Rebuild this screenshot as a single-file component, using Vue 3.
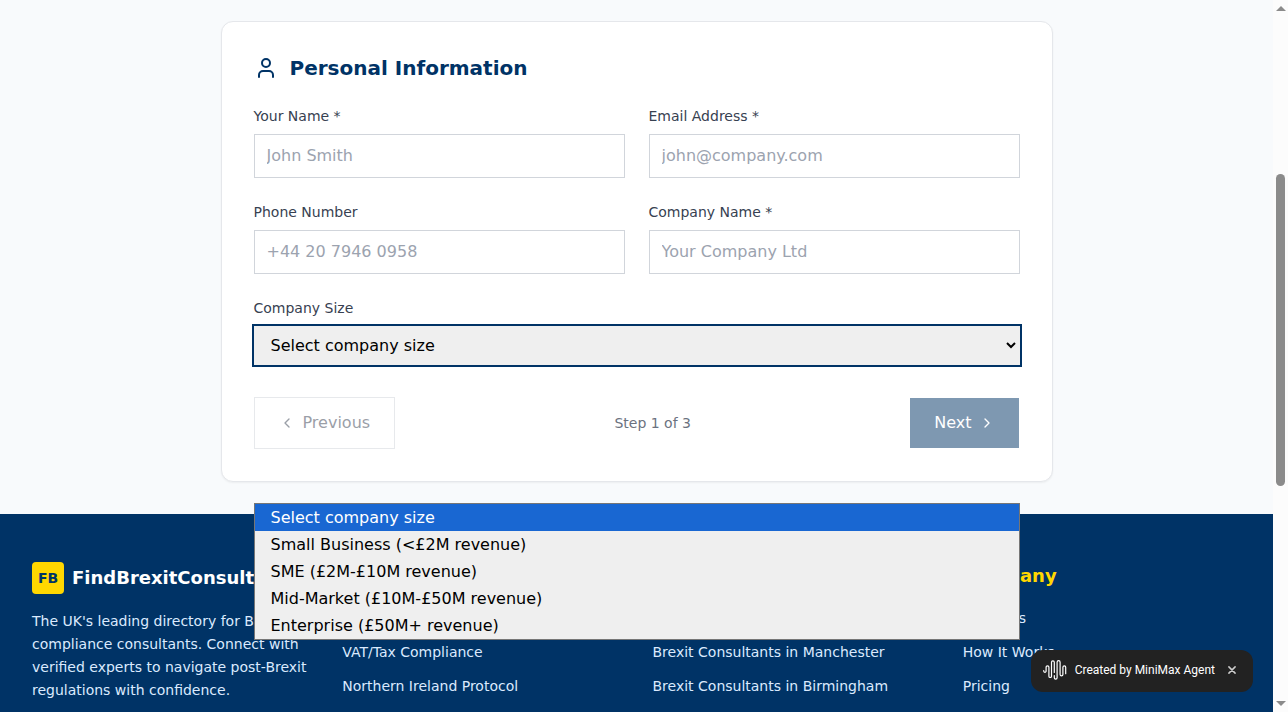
<script setup>
import { ref } from 'vue'

const fields = [
  { id: 'name', label: 'Your Name *', type: 'text', placeholder: 'John Smith' },
  { id: 'email', label: 'Email Address *', type: 'email', placeholder: 'john@company.com' },
  { id: 'phone', label: 'Phone Number', type: 'tel', placeholder: '+44 20 7946 0958' },
  { id: 'company', label: 'Company Name *', type: 'text', placeholder: 'Your Company Ltd' },
]
const sizes = [
  'Select company size',
  'Small Business (<£2M revenue)',
  'SME (£2M-£10M revenue)',
  'Mid-Market (£10M-£50M revenue)',
  'Enterprise (£50M+ revenue)',
]
const size = ref(sizes[0])
const columns = [
  { title: 'Services', links: ['Customs & Trade', 'VAT/Tax Compliance', 'Northern Ireland Protocol'] },
  { title: 'Locations', links: ['Brexit Consultants in London', 'Brexit Consultants in Manchester', 'Brexit Consultants in Birmingham'] },
  { title: 'Company', links: ['About Us', 'How It Works', 'Pricing'] },
]
</script>

<template>
  <div class="shell">
    <div class="page">
      <main class="main">
        <form class="card" @submit.prevent>
          <h2 class="heading">
            <svg class="icon-lg" viewBox="0 0 24 24" aria-hidden="true">
              <path d="M19 21v-2a4 4 0 0 0-4-4H9a4 4 0 0 0-4 4v2" />
              <circle cx="12" cy="7" r="4" />
            </svg>
            Personal Information
          </h2>
          <div class="grid">
            <div v-for="f in fields" :key="f.id" class="field">
              <label :for="f.id">{{ f.label }}</label>
              <input :id="f.id" :type="f.type" :placeholder="f.placeholder" />
            </div>
            <div class="field wide">
              <label for="size">Company Size</label>
              <select id="size" v-model="size">
                <option v-for="s in sizes" :key="s" :value="s">{{ s }}</option>
              </select>
            </div>
          </div>
          <div class="actions">
            <button type="button" class="btn prev" disabled>
              <svg class="icon-sm" viewBox="0 0 24 24" aria-hidden="true"><path d="m15 18-6-6 6-6" /></svg>
              Previous
            </button>
            <span class="step">Step 1 of 3</span>
            <button type="button" class="btn next" disabled>
              Next
              <svg class="icon-sm" viewBox="0 0 24 24" aria-hidden="true"><path d="m9 18 6-6-6-6" /></svg>
            </button>
          </div>
          <ul class="menu" role="listbox" aria-label="Company Size">
            <li
              v-for="s in sizes"
              :key="s"
              role="option"
              :aria-selected="s === size"
              :class="{ active: s === size }"
              @click="size = s"
            >{{ s }}</li>
          </ul>
        </form>
      </main>

      <footer class="footer">
        <div>
          <div class="brand">
            <span class="logo">FB</span>
            <span class="brand-name">FindBrexitConsultants</span>
          </div>
          <p class="about">
            The UK's leading directory for Brexit compliance consultants. Connect with
            verified experts to navigate post-Brexit regulations with confidence.
          </p>
        </div>
        <nav v-for="c in columns" :key="c.title" :aria-label="c.title">
          <h3>{{ c.title }}</h3>
          <ul class="links">
            <li v-for="l in c.links" :key="l"><a href="#">{{ l }}</a></li>
          </ul>
        </nav>
      </footer>

      <aside class="toast">
        <svg class="wave" viewBox="0 0 24 22" aria-hidden="true">
          <path d="M.7 11.500v.6a1.200 1.200 0 0 0 2.400 0V8.200a1.400 1.400 0 0 1 2.800 0v9a1.300 1.300 0 0 0 2.600 0V3.200a1.400 1.400 0 0 1 2.800 0V13.500" />
          <path d="M11.300 16.500v2.300a1.400 1.400 0 0 0 2.800 0V3.200a1.500 1.500 0 0 1 3 0v12.200a1.400 1.400 0 0 0 2.800 0V8.200a1.400 1.400 0 0 1 2.800 0v6.500" />
        </svg>
        <span>Created by MiniMax Agent</span>
        <button type="button" class="close" aria-label="Close">
          <svg viewBox="0 0 8 8" aria-hidden="true"><path d="M.9.9l6.200 6.200M7.100.9.9 7.100" /></svg>
        </button>
      </aside>
    </div>

    <div class="scrollbar" aria-hidden="true">
      <span class="arrow up"></span>
      <span class="before"></span>
      <span class="thumb"></span>
      <span class="after"></span>
      <span class="arrow down"></span>
    </div>
  </div>
</template>

<style>
body {
  margin: 0;
  overflow: hidden;
}
</style>

<style scoped>
.shell {
  display: flex;
  height: 100vh;
  overflow: hidden;
  font-family: "DejaVu Sans", sans-serif;
  font-size: 16px;
  line-height: 26px;
}
.shell * {
  box-sizing: border-box;
}
.page {
  flex: 1;
  min-width: 0;
  overflow: hidden;
  background: #f8fafc;
}
.main {
  position: relative;
  z-index: 1;
  padding: 21px 32px 32px;
}
.card {
  position: relative;
  max-width: 832px;
  margin: 0 auto;
  padding: 32px;
  background: #fff;
  border: 1px solid #e5e7eb;
  border-radius: 12px;
  box-shadow: 0 1px 2px rgba(0, 0, 0, 0.05);
}
.heading {
  display: flex;
  align-items: center;
  gap: 12px;
  margin: 0 0 24px;
  color: #003366;
  font-size: 20px;
  font-weight: 700;
  line-height: 28px;
}
svg {
  flex: none;
  fill: none;
  stroke: currentColor;
  stroke-width: 2;
  stroke-linecap: round;
  stroke-linejoin: round;
}
.icon-lg {
  width: 24px;
  height: 24px;
}
.icon-sm {
  width: 16px;
  height: 16px;
}
.grid {
  display: grid;
  grid-template-columns: 1fr 1fr;
  gap: 24px;
}
.field {
  display: flex;
  flex-direction: column;
  gap: 8px;
  min-width: 0;
}
.wide {
  grid-column: 1 / -1;
}
label {
  color: #374151;
  font-size: 14px;
  font-weight: 500;
  line-height: 20px;
}
input {
  width: 100%;
  height: 44px;
  padding: 0 12px 2px;
  border: 1px solid #d1d5db;
  border-radius: 0;
  background: #fff;
  color: #111827;
  font: inherit;
}
input::placeholder {
  color: #9ca3af;
}
select {
  width: 100%;
  height: 39px;
  padding: 0 12px;
  border: 1px solid #efefef;
  border-radius: 0;
  outline: 0;
  background-color: #efefef;
  box-shadow: 0 0 0 2px #003366;
  color: #000;
  font: inherit;
}
.actions {
  display: flex;
  align-items: center;
  justify-content: space-between;
  margin-top: 32px;
}
.btn {
  display: flex;
  align-items: center;
  gap: 8px;
  padding: 12px 24px;
  border: 0;
  font: inherit;
  opacity: 0.5;
}
.prev {
  border: 1px solid #d1d5db;
  background: #fff;
  color: #374151;
}
.next {
  background: #003366;
  color: #fff;
}
.step {
  color: #6b7280;
  font-size: 14px;
}
.menu {
  position: absolute;
  top: calc(100% + 22px);
  left: 32px;
  right: 32px;
  margin: 0;
  padding: 0;
  border: 1px solid #767676;
  background: #efefef;
  color: #000;
  line-height: 27px;
  list-style: none;
}
.menu li {
  padding: 0 16px;
}
.menu .active {
  background: #1967d2;
  color: #fff;
}
.footer {
  display: grid;
  grid-template-columns: repeat(4, minmax(0, 1fr));
  gap: 32px;
  padding: 48px 32px;
  background: #003366;
  color: #dbeafe;
  font-size: 14px;
}
.brand {
  display: flex;
  align-items: center;
  gap: 8px;
  margin-bottom: 16px;
}
.logo {
  display: grid;
  flex: none;
  place-items: center;
  width: 32px;
  height: 32px;
  border-radius: 4px;
  background: #ffd700;
  color: #003366;
  font-weight: 700;
}
.brand-name {
  color: #fff;
  font-size: 18px;
  font-weight: 700;
}
.about {
  margin: 0;
  line-height: 23px;
}
h3 {
  margin: 0 0 16px;
  color: #ffd700;
  font-size: 18px;
  font-weight: 700;
  line-height: 28px;
}
.links {
  display: grid;
  gap: 10px;
  margin: 0;
  padding: 0;
  line-height: 24px;
  list-style: none;
}
.links a {
  color: inherit;
  text-decoration: none;
}
.toast {
  position: fixed;
  right: 35px;
  bottom: 20px;
  z-index: 2;
  display: flex;
  align-items: center;
  gap: 8px;
  height: 42px;
  padding: 0 12px 2px;
  border-radius: 12px;
  background: #222;
  color: #fff;
  font-family: Roboto, sans-serif;
  font-size: 12px;
  line-height: 18px;
  white-space: nowrap;
}
.wave {
  width: 24px;
  height: 22px;
  stroke-width: 1.2;
}
.close {
  display: grid;
  place-items: center;
  width: 18px;
  height: 18px;
  padding: 0;
  border: 0;
  background: none;
  color: #ccc;
}
.close svg {
  width: 8px;
  height: 8px;
  stroke-width: 1.5;
}
.scrollbar {
  display: flex;
  flex: none;
  flex-direction: column;
  align-items: center;
  width: 15px;
  padding: 6px 0;
  background: #fcfcfc;
}
.arrow {
  width: 0;
  height: 0;
  border: 5px solid transparent;
}
.up {
  border-top: 0;
  border-bottom-color: #8b8b8b;
}
.down {
  border-bottom: 0;
  border-top-color: #8b8b8b;
}
.before {
  flex: 163;
}
.thumb {
  flex: 312;
  width: 9px;
  border-radius: 5px;
  background: #8b8b8b;
}
.after {
  flex: 215;
}
</style>
